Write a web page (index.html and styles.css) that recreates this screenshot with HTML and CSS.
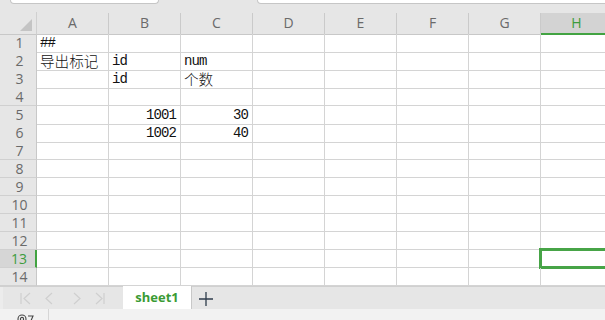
FILE: index.html
```html
<!DOCTYPE html>
<html lang="zh-CN">
<head>
    <meta charset="UTF-8">
    <meta name="viewport" content="width=device-width, initial-scale=1.0">
    <title>sheet1</title>
    <link rel="stylesheet" href="styles.css">
</head>
<body>
    <div class="app">
        <div class="topbar">
            <div class="box box-name"></div>
            <div class="box box-formula"></div>
        </div>

        <div class="sheet">
            <div class="row head">
                <div class="corner"><span class="tri"></span></div>
                <div class="col">A</div>
                <div class="col">B</div>
                <div class="col">C</div>
                <div class="col">D</div>
                <div class="col">E</div>
                <div class="col">F</div>
                <div class="col">G</div>
                <div class="col active">H</div>
            </div>

            <div class="row">
                <div class="num">1</div>
                <div class="cell mono">##</div>
                <div class="cell"></div><div class="cell"></div><div class="cell"></div>
                <div class="cell"></div><div class="cell"></div><div class="cell"></div><div class="cell"></div>
            </div>
            <div class="row">
                <div class="num">2</div>
                <div class="cell cjk">导出标记</div>
                <div class="cell mono">id</div>
                <div class="cell mono">num</div>
                <div class="cell"></div><div class="cell"></div><div class="cell"></div><div class="cell"></div><div class="cell"></div>
            </div>
            <div class="row">
                <div class="num">3</div>
                <div class="cell"></div>
                <div class="cell mono">id</div>
                <div class="cell cjk">个数</div>
                <div class="cell"></div><div class="cell"></div><div class="cell"></div><div class="cell"></div><div class="cell"></div>
            </div>
            <div class="row">
                <div class="num">4</div>
                <div class="cell"></div><div class="cell"></div><div class="cell"></div><div class="cell"></div>
                <div class="cell"></div><div class="cell"></div><div class="cell"></div><div class="cell"></div>
            </div>
            <div class="row">
                <div class="num">5</div>
                <div class="cell"></div>
                <div class="cell mono right">1001</div>
                <div class="cell mono right">30</div>
                <div class="cell"></div><div class="cell"></div><div class="cell"></div><div class="cell"></div><div class="cell"></div>
            </div>
            <div class="row">
                <div class="num">6</div>
                <div class="cell"></div>
                <div class="cell mono right">1002</div>
                <div class="cell mono right">40</div>
                <div class="cell"></div><div class="cell"></div><div class="cell"></div><div class="cell"></div><div class="cell"></div>
            </div>
            <div class="row">
                <div class="num">7</div>
                <div class="cell"></div><div class="cell"></div><div class="cell"></div><div class="cell"></div>
                <div class="cell"></div><div class="cell"></div><div class="cell"></div><div class="cell"></div>
            </div>
            <div class="row">
                <div class="num">8</div>
                <div class="cell"></div><div class="cell"></div><div class="cell"></div><div class="cell"></div>
                <div class="cell"></div><div class="cell"></div><div class="cell"></div><div class="cell"></div>
            </div>
            <div class="row">
                <div class="num">9</div>
                <div class="cell"></div><div class="cell"></div><div class="cell"></div><div class="cell"></div>
                <div class="cell"></div><div class="cell"></div><div class="cell"></div><div class="cell"></div>
            </div>
            <div class="row">
                <div class="num">10</div>
                <div class="cell"></div><div class="cell"></div><div class="cell"></div><div class="cell"></div>
                <div class="cell"></div><div class="cell"></div><div class="cell"></div><div class="cell"></div>
            </div>
            <div class="row">
                <div class="num">11</div>
                <div class="cell"></div><div class="cell"></div><div class="cell"></div><div class="cell"></div>
                <div class="cell"></div><div class="cell"></div><div class="cell"></div><div class="cell"></div>
            </div>
            <div class="row">
                <div class="num">12</div>
                <div class="cell"></div><div class="cell"></div><div class="cell"></div><div class="cell"></div>
                <div class="cell"></div><div class="cell"></div><div class="cell"></div><div class="cell"></div>
            </div>
            <div class="row">
                <div class="num active">13</div>
                <div class="cell"></div><div class="cell"></div><div class="cell"></div><div class="cell"></div>
                <div class="cell"></div><div class="cell"></div><div class="cell"></div><div class="cell selected"></div>
            </div>
            <div class="row">
                <div class="num">14</div>
                <div class="cell"></div><div class="cell"></div><div class="cell"></div><div class="cell"></div>
                <div class="cell"></div><div class="cell"></div><div class="cell"></div><div class="cell"></div>
            </div>
        </div>

        <div class="tabbar">
            <div class="nav">
                <svg width="110" height="22" viewBox="0 0 110 22">
                    <g fill="none" stroke="#cfcfcf" stroke-width="1.2">
                        <path d="M18 6v11M27 6l-6 5.5 6 5.5"/>
                        <path d="M49 6l-6 5.5 6 5.5"/>
                        <path d="M71 6l6 5.5-6 5.5"/>
                        <path d="M93 6l6 5.5-6 5.5M101 6v11"/>
                    </g>
                </svg>
            </div>
            <div class="tab">sheet1</div>
            <div class="add">
                <svg width="16" height="16" viewBox="0 0 16 16">
                    <path d="M8 1v14M1 8h14" stroke="#2f3d4c" stroke-width="1.3" fill="none"/>
                </svg>
            </div>
        </div>

        <div class="status">
            <div class="status-icon">
                <svg width="20" height="12" viewBox="0 0 20 12">
                    <g fill="none" stroke="#444" stroke-width="1.1">
                        <circle cx="6" cy="8" r="4"/>
                        <circle cx="6" cy="8" r="1.6"/>
                        <path d="M12 5h5l-3 7"/>
                    </g>
                </svg>
            </div>
        </div>
    </div>
</body>
</html>
```

FILE: styles.css
```css
html, body {
    margin: 0;
    padding: 0;
    overflow: hidden;
}

body {
    width: 605px;
    height: 320px;
    background: #e6e6e6;
    font-family: "Open Sans", "Noto Sans", sans-serif;
}

.app {
    width: 605px;
    height: 320px;
    overflow: hidden;
    display: flex;
    flex-direction: column;
}

/* formula bar remnants */
.topbar {
    height: 12px;
    flex: none;
    display: flex;
    align-items: flex-start;
    background: #e6e6e6;
}

.box {
    height: 3px;
    background: #fff;
    border: 1px solid #c6c6c6;
    border-top: none;
    border-radius: 0 0 4px 4px;
}

.box-name {
    width: 147px;
    margin-left: 10px;
}

.box-formula {
    flex: 1;
    margin-left: 98px;
    margin-right: -10px;
}

/* grid */
.sheet {
    flex: none;
    background: #fff;
    width: 700px;
}

.row {
    display: grid;
    grid-template-columns: 37px repeat(8, 72px);
    height: 18px;
}

.row.head {
    height: 22px;
    background: #e6e6e6;
}

.corner {
    position: relative;
    border-right: 1px solid #d0d0d0;
    border-bottom: 1px solid #c8c8c8;
    box-sizing: border-box;
}

.tri {
    position: absolute;
    right: 4px;
    bottom: 3px;
    width: 0;
    height: 0;
    border-left: 12px solid transparent;
    border-bottom: 12px solid #c4c4c4;
}

.col {
    box-sizing: border-box;
    border-right: 1px solid #cacaca;
    border-bottom: 1px solid #c8c8c8;
    margin-top: 1px;
    text-align: center;
    font-size: 14px;
    line-height: 20px;
    color: #6a6a6a;
}

.col.active {
    background: #d3d3d3;
    color: #3d9c3d;
    border-bottom: 2px solid #42a342;
}

.num {
    box-sizing: border-box;
    background: #e6e6e6;
    border-right: 1px solid #c8c8c8;
    border-bottom: 1px solid #d0d0d0;
    padding-left: 3px;
    text-align: center;
    font-size: 14px;
    line-height: 17px;
    color: #6a6a6a;
}

.num.active {
    background: #d6d6d6;
    color: #3d9c3d;
    border-right: 2px solid #42a342;
}

.cell {
    position: relative;
    box-sizing: border-box;
    border-right: 1px solid #d4d4d4;
    border-bottom: 1px solid #d4d4d4;
    padding: 0 3px;
    white-space: nowrap;
    color: #111;
}

.mono {
    font-family: "Liberation Mono", "DejaVu Sans Mono", monospace;
    font-size: 14px;
    letter-spacing: -0.9px;
    line-height: 18px;
}

.mono.right {
    padding-right: 4px;
}

.cjk {
    font-family: "Noto Sans CJK SC", sans-serif;
    font-size: 14.6px;
    line-height: 17px;
    font-weight: 300;
}

.right {
    text-align: right;
}

.selected::after {
    content: "";
    position: absolute;
    left: -2px;
    top: -2px;
    right: -2px;
    bottom: -2px;
    border: 3px solid #47a447;
}

/* sheet tabs */
.tabbar {
    flex: none;
    height: 22px;
    display: flex;
    align-items: stretch;
    background: #e6e6e6;
    border-top: 1px solid #d0d0d0;
}

.nav {
    width: 123px;
    flex: none;
    border-left: 3px solid #ececec;
    box-sizing: border-box;
}

.nav svg {
    display: block;
}

.tab {
    width: 69px;
    flex: none;
    background: #fff;
    border-right: 1px solid #c8c8c8;
    box-sizing: border-box;
    text-align: center;
    font-size: 13px;
    font-weight: 700;
    line-height: 22px;
    color: #3a9b35;
    margin-top: -1px;
}

.add {
    padding: 4px 0 0 6px;
}

.add svg {
    display: block;
}

/* status bar */
.status {
    flex: 1;
    background: #f2f2f2;
    display: flex;
}

.status-icon {
    width: 49px;
    border-right: 1px solid #d6d6d6;
    padding: 2px 0 0 16px;
    box-sizing: border-box;
    overflow: hidden;
}

.status-icon svg {
    display: block;
}
```
